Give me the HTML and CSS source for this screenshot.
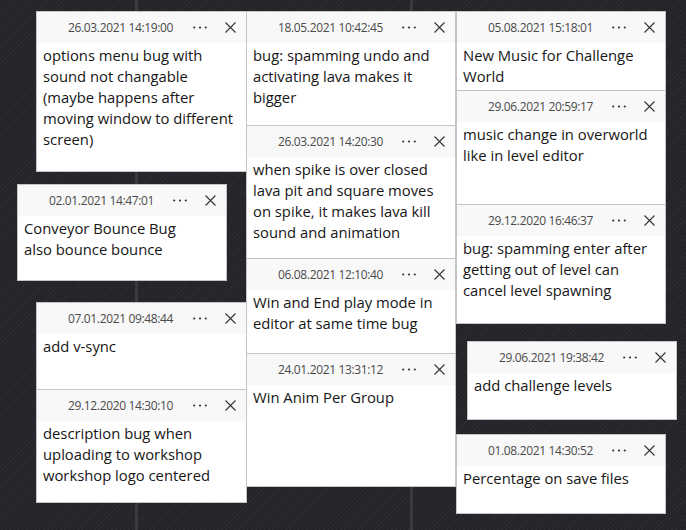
FILE: index.html
```html
<!DOCTYPE html>
<html lang="en">
<head>
<meta charset="utf-8">
<title>Sticky Notes</title>
<link rel="stylesheet" href="styles.css">
</head>
<body>
<div class="desktop">
  <div class="rail rail-a"></div>
  <div class="rail rail-b"></div>

  <div class="note" style="left:36px;top:11px;width:211px;height:161px">
    <div class="note-head"><span class="date">26.03.2021 14:19:00</span><span class="btn dots"><svg viewBox="0 0 14 3" width="14" height="3"><circle cx="1.2" cy="1.5" r="1.1"/><circle cx="7" cy="1.5" r="1.1"/><circle cx="12.8" cy="1.5" r="1.1"/></svg></span><span class="btn close"><svg viewBox="0 0 11 11" width="11" height="11"><path d="M0.5 0.5L10.5 10.5M10.5 0.5L0.5 10.5"/></svg></span></div>
    <div class="note-body">options menu bug with sound not changable (maybe happens after moving window to different screen)</div>
  </div>

  <div class="note" style="left:246px;top:11px;width:210px;height:115px">
    <div class="note-head"><span class="date">18.05.2021 10:42:45</span><span class="btn dots"><svg viewBox="0 0 14 3" width="14" height="3"><circle cx="1.2" cy="1.5" r="1.1"/><circle cx="7" cy="1.5" r="1.1"/><circle cx="12.8" cy="1.5" r="1.1"/></svg></span><span class="btn close"><svg viewBox="0 0 11 11" width="11" height="11"><path d="M0.5 0.5L10.5 10.5M10.5 0.5L0.5 10.5"/></svg></span></div>
    <div class="note-body">bug: spamming undo and activating lava makes it bigger</div>
  </div>

  <div class="note" style="left:246px;top:125px;width:210px;height:134px">
    <div class="note-head"><span class="date">26.03.2021 14:20:30</span><span class="btn dots"><svg viewBox="0 0 14 3" width="14" height="3"><circle cx="1.2" cy="1.5" r="1.1"/><circle cx="7" cy="1.5" r="1.1"/><circle cx="12.8" cy="1.5" r="1.1"/></svg></span><span class="btn close"><svg viewBox="0 0 11 11" width="11" height="11"><path d="M0.5 0.5L10.5 10.5M10.5 0.5L0.5 10.5"/></svg></span></div>
    <div class="note-body">when spike is over closed lava pit and square moves on spike, it makes lava kill sound and animation</div>
  </div>

  <div class="note" style="left:246px;top:258px;width:210px;height:96px">
    <div class="note-head"><span class="date">06.08.2021 12:10:40</span><span class="btn dots"><svg viewBox="0 0 14 3" width="14" height="3"><circle cx="1.2" cy="1.5" r="1.1"/><circle cx="7" cy="1.5" r="1.1"/><circle cx="12.8" cy="1.5" r="1.1"/></svg></span><span class="btn close"><svg viewBox="0 0 11 11" width="11" height="11"><path d="M0.5 0.5L10.5 10.5M10.5 0.5L0.5 10.5"/></svg></span></div>
    <div class="note-body">Win and End play mode in editor at same time bug</div>
  </div>

  <div class="note" style="left:246px;top:353px;width:210px;height:134px">
    <div class="note-head"><span class="date">24.01.2021 13:31:12</span><span class="btn dots"><svg viewBox="0 0 14 3" width="14" height="3"><circle cx="1.2" cy="1.5" r="1.1"/><circle cx="7" cy="1.5" r="1.1"/><circle cx="12.8" cy="1.5" r="1.1"/></svg></span><span class="btn close"><svg viewBox="0 0 11 11" width="11" height="11"><path d="M0.5 0.5L10.5 10.5M10.5 0.5L0.5 10.5"/></svg></span></div>
    <div class="note-body">Win Anim Per Group</div>
  </div>

  <div class="note" style="left:456px;top:11px;width:210px;height:80px">
    <div class="note-head"><span class="date">05.08.2021 15:18:01</span><span class="btn dots"><svg viewBox="0 0 14 3" width="14" height="3"><circle cx="1.2" cy="1.5" r="1.1"/><circle cx="7" cy="1.5" r="1.1"/><circle cx="12.8" cy="1.5" r="1.1"/></svg></span><span class="btn close"><svg viewBox="0 0 11 11" width="11" height="11"><path d="M0.5 0.5L10.5 10.5M10.5 0.5L0.5 10.5"/></svg></span></div>
    <div class="note-body">New Music for Challenge World</div>
  </div>

  <div class="note" style="left:456px;top:90px;width:210px;height:115px">
    <div class="note-head"><span class="date">29.06.2021 20:59:17</span><span class="btn dots"><svg viewBox="0 0 14 3" width="14" height="3"><circle cx="1.2" cy="1.5" r="1.1"/><circle cx="7" cy="1.5" r="1.1"/><circle cx="12.8" cy="1.5" r="1.1"/></svg></span><span class="btn close"><svg viewBox="0 0 11 11" width="11" height="11"><path d="M0.5 0.5L10.5 10.5M10.5 0.5L0.5 10.5"/></svg></span></div>
    <div class="note-body">music change in overworld like in level editor</div>
  </div>

  <div class="note" style="left:456px;top:204px;width:210px;height:120px">
    <div class="note-head"><span class="date">29.12.2020 16:46:37</span><span class="btn dots"><svg viewBox="0 0 14 3" width="14" height="3"><circle cx="1.2" cy="1.5" r="1.1"/><circle cx="7" cy="1.5" r="1.1"/><circle cx="12.8" cy="1.5" r="1.1"/></svg></span><span class="btn close"><svg viewBox="0 0 11 11" width="11" height="11"><path d="M0.5 0.5L10.5 10.5M10.5 0.5L0.5 10.5"/></svg></span></div>
    <div class="note-body">bug: spamming enter after getting out of level can cancel level spawning</div>
  </div>

  <div class="note" style="left:17px;top:184px;width:210px;height:97px">
    <div class="note-head"><span class="date">02.01.2021 14:47:01</span><span class="btn dots"><svg viewBox="0 0 14 3" width="14" height="3"><circle cx="1.2" cy="1.5" r="1.1"/><circle cx="7" cy="1.5" r="1.1"/><circle cx="12.8" cy="1.5" r="1.1"/></svg></span><span class="btn close"><svg viewBox="0 0 11 11" width="11" height="11"><path d="M0.5 0.5L10.5 10.5M10.5 0.5L0.5 10.5"/></svg></span></div>
    <div class="note-body">Conveyor Bounce Bug<br>also bounce bounce</div>
  </div>

  <div class="note" style="left:36px;top:302px;width:211px;height:88px">
    <div class="note-head"><span class="date">07.01.2021 09:48:44</span><span class="btn dots"><svg viewBox="0 0 14 3" width="14" height="3"><circle cx="1.2" cy="1.5" r="1.1"/><circle cx="7" cy="1.5" r="1.1"/><circle cx="12.8" cy="1.5" r="1.1"/></svg></span><span class="btn close"><svg viewBox="0 0 11 11" width="11" height="11"><path d="M0.5 0.5L10.5 10.5M10.5 0.5L0.5 10.5"/></svg></span></div>
    <div class="note-body">add v-sync</div>
  </div>

  <div class="note" style="left:36px;top:389px;width:211px;height:114px">
    <div class="note-head"><span class="date">29.12.2020 14:30:10</span><span class="btn dots"><svg viewBox="0 0 14 3" width="14" height="3"><circle cx="1.2" cy="1.5" r="1.1"/><circle cx="7" cy="1.5" r="1.1"/><circle cx="12.8" cy="1.5" r="1.1"/></svg></span><span class="btn close"><svg viewBox="0 0 11 11" width="11" height="11"><path d="M0.5 0.5L10.5 10.5M10.5 0.5L0.5 10.5"/></svg></span></div>
    <div class="note-body">description bug when uploading to workshop<br>workshop logo centered</div>
  </div>

  <div class="note" style="left:467px;top:341px;width:210px;height:79px">
    <div class="note-head"><span class="date">29.06.2021 19:38:42</span><span class="btn dots"><svg viewBox="0 0 14 3" width="14" height="3"><circle cx="1.2" cy="1.5" r="1.1"/><circle cx="7" cy="1.5" r="1.1"/><circle cx="12.8" cy="1.5" r="1.1"/></svg></span><span class="btn close"><svg viewBox="0 0 11 11" width="11" height="11"><path d="M0.5 0.5L10.5 10.5M10.5 0.5L0.5 10.5"/></svg></span></div>
    <div class="note-body">add challenge levels</div>
  </div>

  <div class="note" style="left:456px;top:434px;width:210px;height:80px">
    <div class="note-head"><span class="date">01.08.2021 14:30:52</span><span class="btn dots"><svg viewBox="0 0 14 3" width="14" height="3"><circle cx="1.2" cy="1.5" r="1.1"/><circle cx="7" cy="1.5" r="1.1"/><circle cx="12.8" cy="1.5" r="1.1"/></svg></span><span class="btn close"><svg viewBox="0 0 11 11" width="11" height="11"><path d="M0.5 0.5L10.5 10.5M10.5 0.5L0.5 10.5"/></svg></span></div>
    <div class="note-body">Percentage on save files</div>
  </div>
</div>
</body>
</html>
```

FILE: styles.css
```css
html, body {
  margin: 0;
  padding: 0;
}
body {
  width: 686px;
  height: 530px;
  overflow: hidden;
  font-family: "Open Sans", "Noto Sans", sans-serif;
}
.desktop {
  position: relative;
  width: 686px;
  height: 530px;
  background-color: #25272c;
  background-image: repeating-linear-gradient(135deg, #2a2c31 0px, #2a2c31 1px, #222428 1px, #222428 3px);
  overflow: hidden;
}
.rail {
  position: absolute;
  top: 0;
  bottom: 0;
  width: 3px;
  background: #3a3b3f;
}
.rail-a { left: 135px; }
.rail-b { left: 410px; }

.note {
  position: absolute;
  box-sizing: border-box;
  background: #ffffff;
  border: 1px solid #c4c4c4;
  display: flex;
  flex-direction: column;
  overflow: hidden;
}
.note-head {
  height: 31px;
  flex: none;
  background: #f8f8f8;
  display: flex;
  align-items: center;
  color: #4a4a4a;
}
.date {
  margin-left: 31px;
  flex: 1;
  font-size: 12px;
  letter-spacing: -0.35px;
  white-space: nowrap;
}
.btn {
  width: 31px;
  height: 31px;
  display: flex;
  align-items: center;
  justify-content: center;
  flex: none;
}
.btn svg { display: block; }
.dots svg circle { fill: #333; }
.close svg path {
  stroke: #333;
  stroke-width: 1.1;
  fill: none;
}
.note-body {
  padding: 2px 6px 0 6px;
  font-size: 14.8px;
  line-height: 21px;
  color: #161616;
}
```
